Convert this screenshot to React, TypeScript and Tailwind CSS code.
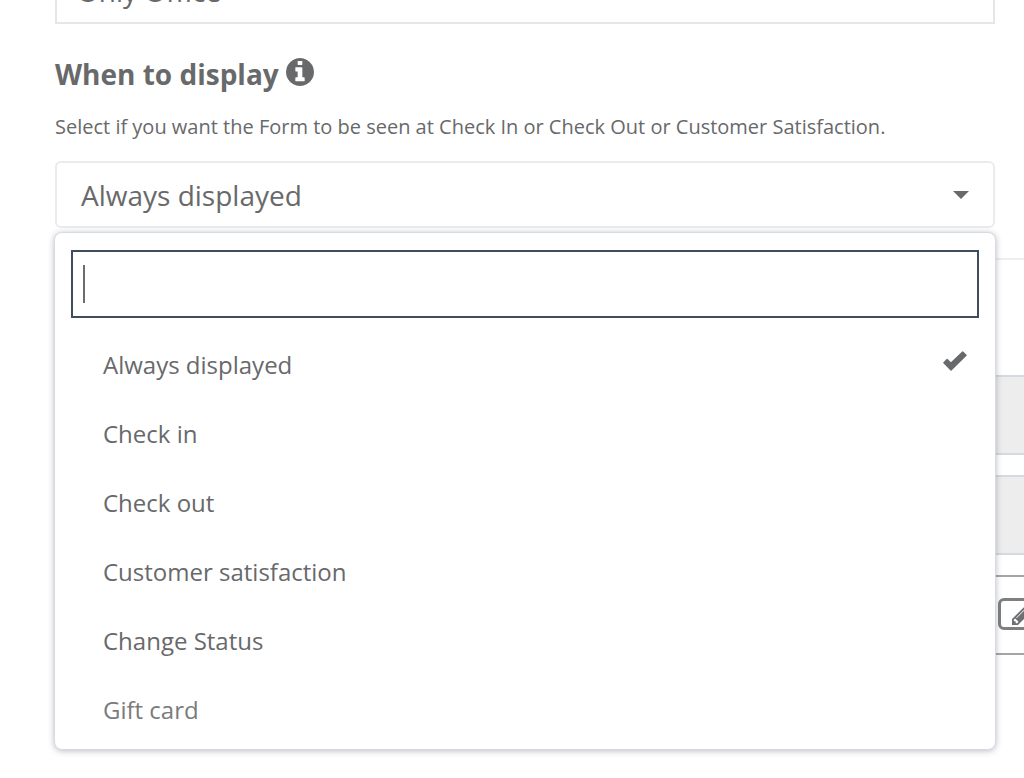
import { useState } from "react";
import clsx from "clsx";

const displayOptions = [
  "Always displayed",
  "Check in",
  "Check out",
  "Customer satisfaction",
  "Change Status",
  "Gift card",
];

function InfoIcon() {
  return (
    <svg viewBox="128 128 1536 1536" className="size-7" fill="currentColor" aria-hidden="true">
      <path d="M1152 1376v-160q0-14-9-23t-23-9h-96v-512q0-14-9-23t-23-9h-320q-14 0-23 9t-9 23v160q0 14 9 23t23 9h96v320h-96q-14 0-23 9t-9 23v160q0 14 9 23t23 9h448q14 0 23-9t9-23zm-128-896v-160q0-14-9-23t-23-9h-192q-14 0-23 9t-9 23v160q0 14 9 23t23 9h192q14 0 23-9t9-23zm640 416q0 209-103 385.5t-279.5 279.5-385.5 103-385.5-103-279.5-279.5-103-385.5 103-385.5 279.5-279.5 385.5-103 385.5 103 279.5 279.5 103 385.5z" />
    </svg>
  );
}

function CheckIcon() {
  return (
    <svg viewBox="0 0 24 20" className="h-5 w-6" fill="currentColor" aria-hidden="true">
      <path d="M.4 11.2 3.6 8q.5-.5 1 0l3.3 3.2L19.2.5q.5-.5 1 0l3.3 3.3q.5.5 0 1L8.5 19.6q-.5.5-1 0L.4 12.2q-.5-.5 0-1z" />
    </svg>
  );
}

function PencilIcon() {
  return (
    <svg viewBox="128 128 1536 1536" className="size-[22px]" fill="currentColor" aria-hidden="true">
      <path d="M491 1536l91-91-235-235-91 91v107h128v128h107zm523-928q0-22-22-22-10 0-17 7l-542 542q-7 7-7 17 0 22 22 22 10 0 17-7l542-542q7-7 7-17zm-54-192l416 416-832 832h-416v-416zm683 96q0 53-37 90l-166 166-416-416 166-165q36-38 90-38 53 0 91 38l235 234q37 39 37 91z" />
    </svg>
  );
}

function DisplaySelect() {
  const [selected, setSelected] = useState(displayOptions[0]);
  const [open, setOpen] = useState(true);
  const [search, setSearch] = useState("");

  const visible = displayOptions.filter((option) =>
    option.toLowerCase().includes(search.toLowerCase()),
  );

  return (
    <div className="relative">
      <button
        id="when-to-display"
        type="button"
        aria-haspopup="listbox"
        aria-expanded={open}
        aria-labelledby="when-to-display-label"
        onClick={() => setOpen(!open)}
        className="flex h-[67px] w-full items-center justify-between rounded-md border-2 border-[#e9ebed] bg-white px-6 text-[28px]"
      >
        <span>{selected}</span>
        <svg viewBox="0 0 16 8" className="h-2 w-4" fill="currentColor" aria-hidden="true">
          <path d="M0 0h16L8 8z" />
        </svg>
      </button>

      {open && (
        <div className="absolute -inset-x-px top-full z-10 mt-1 rounded-lg border border-[#d8dae0] bg-white px-4 pt-[17px] pb-[5px] shadow-[0_1px_6px_rgba(60,65,90,0.35)]">
          <div className="relative">
            <input
              type="text"
              aria-label="Search"
              autoComplete="off"
              value={search}
              onChange={(e) => setSearch(e.target.value)}
              className="block h-[68px] w-full border-2 border-[#3f4d5e] bg-white px-3 text-[28px] caret-transparent outline-none"
            />
            {!search && (
              <span className="pointer-events-none absolute inset-y-[15px] left-3 w-0.5 bg-[#6b6c6e]" />
            )}
          </div>
          <ul role="listbox" aria-labelledby="when-to-display-label" className="pt-3">
            {visible.map((option) => (
              <li key={option} role="option" aria-selected={option === selected}>
                <button
                  type="button"
                  onClick={() => {
                    setSelected(option);
                    setOpen(false);
                  }}
                  className={clsx(
                    "flex h-[69px] w-full items-center justify-between pr-3 pl-8 text-left text-2xl",
                    option === "Gift card" && "text-[#7b7b7c]",
                  )}
                >
                  <span>{option}</span>
                  {option === selected && (
                    <span className="pb-2">
                      <CheckIcon />
                    </span>
                  )}
                </button>
              </li>
            ))}
          </ul>
        </div>
      )}
    </div>
  );
}

export default function App() {
  return (
    <main className="min-h-screen overflow-hidden bg-white font-['Open_Sans',sans-serif] text-[#68696b]">
      <section className="-mt-[43px] pr-[29px] pl-[55px]">
        <input
          type="text"
          aria-label="Form name"
          defaultValue="Only Office"
          className="block h-[67px] w-full border-2 border-[#e4e6e8] bg-white px-5 text-[28px] outline-none"
        />

        <div className="flex items-start gap-[7px] pt-[30px]">
          <label
            id="when-to-display-label"
            htmlFor="when-to-display"
            className="text-[28px] leading-10 font-bold"
          >
            When to display
          </label>
          <span className="pt-1">
            <InfoIcon />
          </span>
        </div>
        <p className="pt-[18px] pb-[19px] text-xl leading-[30px]">
          Select if you want the Form to be seen at Check In or Check Out or Customer Satisfaction.
        </p>

        <DisplaySelect />
      </section>

      <section className="pt-[30px] pl-14">
        <hr className="border-t-2 border-[#efefef]" />
        <div className="flex flex-col gap-5 pt-[115px]">
          <div className="h-20 border-y-2 border-[#d5dae0] bg-[#ededed]" />
          <div className="h-20 border-y-2 border-[#d5dae0] bg-[#ededed]" />
          <div className="flex h-20 items-center justify-end border-y-2 border-[#a5a5a5] pb-0.5">
            <button
              type="button"
              aria-label="Edit"
              className="-mr-6 flex h-8 w-[50px] items-center justify-center rounded-md border-3 border-[#7e7f80] text-[#6f7072]"
            >
              <PencilIcon />
            </button>
          </div>
        </div>
      </section>
    </main>
  );
}
